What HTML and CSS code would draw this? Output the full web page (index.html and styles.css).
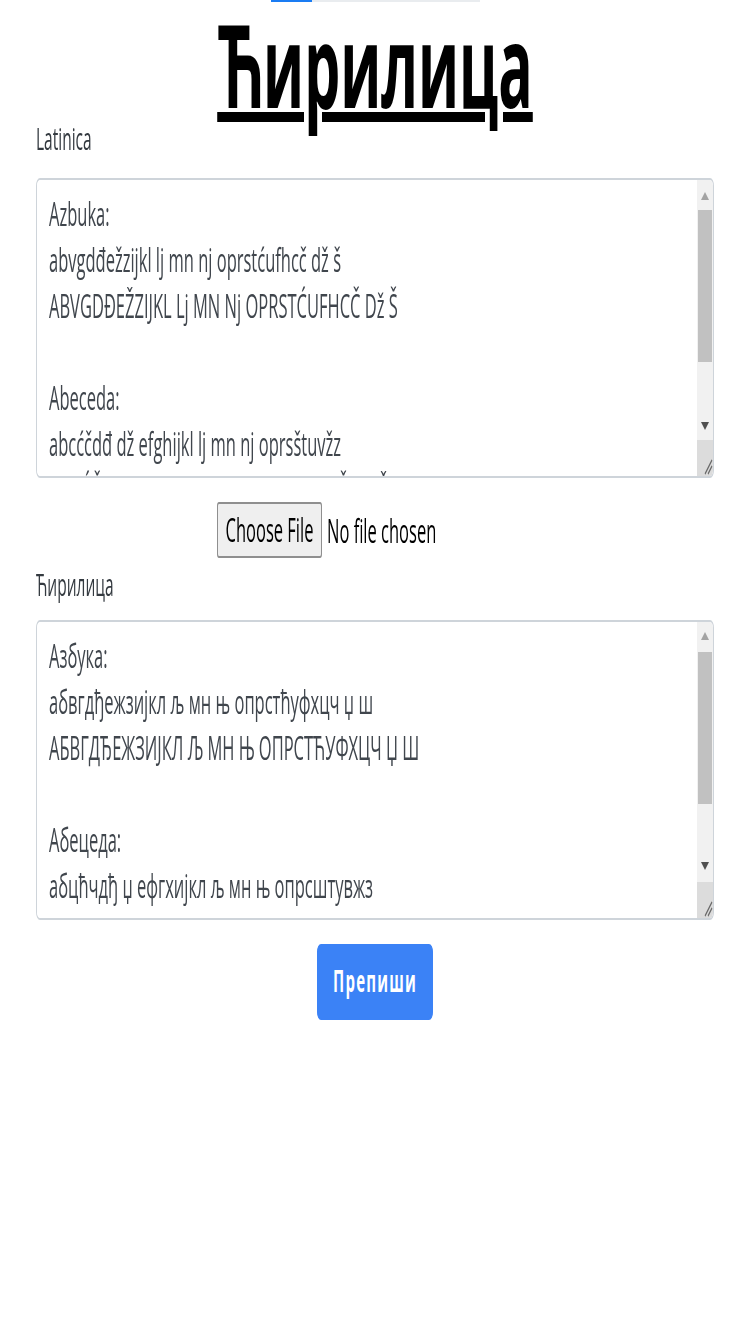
FILE: index.html
```html
<!DOCTYPE html>
<html lang="sr">
<head>
<meta charset="utf-8">
<title>Ћирилица</title>
<link rel="stylesheet" href="styles.css">
</head>
<body>
<div class="page">
  <div class="progress"><div class="progress-fill"></div></div>
  <h1 class="title">Ћирилица</h1>
  <form class="form">
    <label class="label label-1" for="lat">Latinica</label>
    <div class="box">
      <textarea id="lat" class="box-text">Azbuka:
abvgdđežzijkl lj mn nj oprstćufhcč dž š
ABVGDĐEŽZIJKL Lj MN Nj OPRSTĆUFHCČ Dž Š

Abeceda:
abcćčdđ dž efghijkl lj mn nj oprsštuvžz
ABCĆČDĐ Dž EFGHIJKL Lj MN Nj OPRSŠTUVŽZ
</textarea>
      <div class="sbar" aria-hidden="true">
        <div class="sbar-btn"><svg class="arrow" viewBox="0 0 8 4"><path d="M0 4 L4 0 L8 4 Z" fill="#a3a3a3"/></svg></div>
        <div class="sbar-track"><div class="sbar-thumb"></div></div>
        <div class="sbar-btn"><svg class="arrow" viewBox="0 0 8 4"><path d="M0 0 L8 0 L4 4 Z" fill="#505050"/></svg></div>
        <div class="sbar-corner"><svg class="grip" viewBox="0 0 10 10"><path d="M9 2 L2 9 M9 5 L5 9" stroke="#6b6b6b" stroke-width="1" fill="none"/></svg></div>
      </div>
    </div>
    <div class="file-row"><input class="file" type="file"></div>
    <label class="label label-2" for="cyr">Ћирилица</label>
    <div class="box box-2">
      <textarea id="cyr" class="box-text">Азбука:
абвгдђежзијкл љ мн њ опрстћуфхцч џ ш
АБВГДЂЕЖЗИЈКЛ Љ МН Њ ОПРСТЋУФХЦЧ Џ Ш

Абецеда:
абцћчдђ џ ефгхијкл љ мн њ опрсштувжз
АБЦЋЧДЂ Џ ЕФГХИЈКЛ Љ МН Њ ОПРСШТУВЖЗ
</textarea>
      <div class="sbar" aria-hidden="true">
        <div class="sbar-btn"><svg class="arrow" viewBox="0 0 8 4"><path d="M0 4 L4 0 L8 4 Z" fill="#a3a3a3"/></svg></div>
        <div class="sbar-track"><div class="sbar-thumb"></div></div>
        <div class="sbar-btn"><svg class="arrow" viewBox="0 0 8 4"><path d="M0 0 L8 0 L4 4 Z" fill="#505050"/></svg></div>
        <div class="sbar-corner"><svg class="grip" viewBox="0 0 10 10"><path d="M9 2 L2 9 M9 5 L5 9" stroke="#6b6b6b" stroke-width="1" fill="none"/></svg></div>
      </div>
    </div>
    <div class="actions"><button type="button" class="btn">Препиши</button></div>
  </form>
</div>
</body>
</html>
```

FILE: styles.css
```css
html, body {
  margin: 0;
  padding: 0;
  background: #ffffff;
}

body {
  font-family: "Open Sans", "Noto Sans", sans-serif;
  color: #212529;
  height: 1334px;
}

.page {
  width: 750px;
  height: 667px;
  transform: scaleY(2);
  transform-origin: top left;
}

.progress {
  width: 209px;
  height: 1px;
  margin: 0 auto;
  background: #e9ecef;
  display: flex;
}

.progress-fill {
  width: 41px;
  background: #1a7cf3;
}

.title {
  margin: -1px 0 0;
  font-family: "Open Sans", "Noto Sans", sans-serif;
  font-weight: 700;
  font-size: 57px;
  line-height: 64px;
  text-align: center;
  color: #000000;
  text-decoration: underline;
  text-decoration-thickness: 5px;
  text-underline-offset: 2px;
}

.form {
  padding: 0 36px;
  display: flex;
  flex-direction: column;
}

.label {
  display: block;
  font-size: 15.5px;
  line-height: 23px;
  color: #343a40;
}

.label-1 {
  margin-top: -6px;
}

.label-2 {
  margin-top: 2px;
}

.box {
  display: flex;
  box-sizing: border-box;
  height: 150px;
  margin-top: 8px;
  border: 1px solid #ced4da;
  border-radius: 4px;
  background: #ffffff;
  overflow: hidden;
}

.box-2 {
  margin-top: 6px;
}

.box-text {
  flex: 1;
  min-width: 0;
  margin: 0;
  padding: 5px 12px 0;
  border: 0;
  outline: none;
  font-family: "Open Sans", "Noto Sans", sans-serif;
  font-size: 16.5px;
  line-height: 23px;
  color: #40464d;
  background: #ffffff;
  resize: none;
  overflow: hidden;
}

.sbar {
  width: 16px;
  display: flex;
  flex-direction: column;
  background: #f1f1f1;
}

.sbar-btn {
  height: 15px;
  display: flex;
  align-items: center;
  justify-content: center;
}

.arrow {
  width: 8px;
  height: 4px;
}

.sbar-track {
  flex: 1;
  display: flex;
  flex-direction: column;
}

.sbar-thumb {
  height: 76px;
  margin: 0 1px;
  background: #c1c1c1;
}

.sbar-corner {
  height: 18px;
  background: #dcdcdc;
  display: flex;
  align-items: flex-end;
  justify-content: flex-end;
}

.grip {
  width: 10px;
  height: 10px;
}

.file-row {
  display: flex;
  justify-content: center;
  margin-top: 12px;
}

.file {
  width: 316px;
  height: 27.5px;
  font-family: "Open Sans", "Noto Sans", sans-serif;
  font-size: 16.5px;
  color: #000000;
}

.file::file-selector-button {
  width: 105px;
  height: 27.5px;
  margin-right: 5px;
  padding: 0;
  border: 1px solid #8f8f8f;
  border-radius: 2px;
  background: #efefef;
  font-family: "Open Sans", "Noto Sans", sans-serif;
  font-size: 16.5px;
  color: #000000;
}

.actions {
  display: flex;
  justify-content: center;
  margin-top: 12px;
}

.btn {
  width: 116px;
  height: 38.5px;
  border: 1px solid #3b82f6;
  border-radius: 4px;
  background: #3b82f6;
  color: #ffffff;
  font-family: "Open Sans", "Noto Sans", sans-serif;
  font-weight: 700;
  font-size: 15px;
  letter-spacing: 1.2px;
  line-height: 23px;
  padding: 0;
}
```
